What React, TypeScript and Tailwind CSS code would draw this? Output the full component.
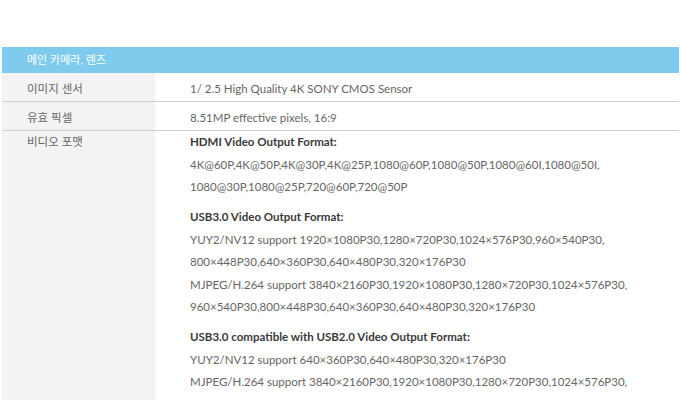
const font = "font-['Lato','Noto_Sans_CJK_KR',sans-serif]";

const formatGroups = [
  {
    title: "HDMI Video Output Format:",
    lines: [
      "4K@60P,4K@50P,4K@30P,4K@25P,1080@60P,1080@50P,1080@60I,1080@50I,",
      "1080@30P,1080@25P,720@60P,720@50P",
    ],
  },
  {
    title: "USB3.0 Video Output Format:",
    lines: [
      "YUY2/NV12 support 1920×1080P30,1280×720P30,1024×576P30,960×540P30,",
      "800×448P30,640×360P30,640×480P30,320×176P30",
      "MJPEG/H.264 support 3840×2160P30,1920×1080P30,1280×720P30,1024×576P30,",
      "960×540P30,800×448P30,640×360P30,640×480P30,320×176P30",
    ],
  },
  {
    title: "USB3.0 compatible with USB2.0 Video Output Format:",
    lines: [
      "YUY2/NV12 support 640×360P30,640×480P30,320×176P30",
      "MJPEG/H.264 support 3840×2160P30,1920×1080P30,1280×720P30,1024×576P30,",
      "960×540P30,800×448P30,640×360P30,640×480P30,320×176P30",
    ],
  },
];

const simpleRows = [
  { label: "이미지 센서", value: "1/ 2.5 High Quality 4K SONY CMOS Sensor" },
  { label: "유효 픽셀", value: "8.51MP effective pixels, 16:9" },
];

export default function App() {
  return (
    <div className={`min-h-[400px] bg-white pt-[47px] ${font}`}>
      <div className="mx-[2px]">
        <div className="flex h-[26px] items-center bg-[#7ecbee] pl-[25px] pt-[1px] text-[11px] text-white">
          메인 카메라, 렌즈
        </div>
        {simpleRows.map((row) => (
          <div key={row.label} className="flex h-[29px] border-b border-[#cfcfcf] text-[11.5px] text-[#666]">
            <div className="flex w-[153px] items-center bg-[#f3f3f3] pl-[25px] pt-[4px]">{row.label}</div>
            <div className="flex items-center pl-[35px] pt-[4px]">{row.value}</div>
          </div>
        ))}
        <div className="flex text-[11.5px] leading-[22.5px] text-[#666]">
          <div className="w-[153px] shrink-0 bg-[#f3f3f3] pl-[25px]">비디오 포맷</div>
          <div className="flex flex-col gap-[7.5px] pl-[35px]">
            {formatGroups.map((group) => (
              <div key={group.title}>
                <p className="font-bold text-[#3a3a3a]">{group.title}</p>
                {group.lines.map((line) => (
                  <p key={line}>{line}</p>
                ))}
              </div>
            ))}
          </div>
        </div>
      </div>
    </div>
  );
}
